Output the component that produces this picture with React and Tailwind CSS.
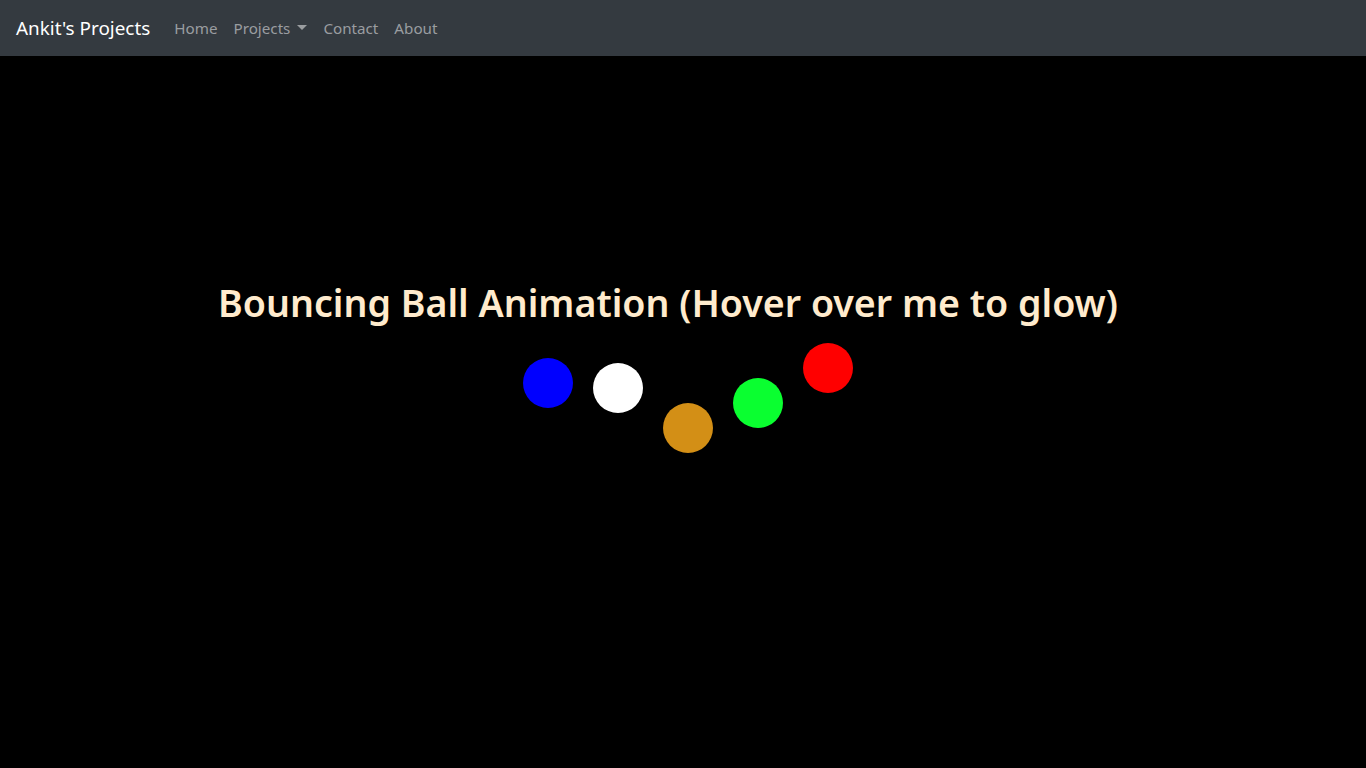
import React from "react";

export default function App() {
  const font = { fontFamily: '"Noto Sans", "Open Sans", sans-serif' };
  return (
    <div className="min-h-[768px] bg-black flex flex-col" style={font}>
      <nav className="h-[56px] bg-[#343a40] flex items-center px-4">
        <span className="text-[18.9px] text-white mr-4 leading-none">Ankit's Projects</span>
        <ul className="flex items-center text-[15.2px] text-[#9a9da0]">
          <li className="px-2">Home</li>
          <li className="px-2 flex items-center">
            Projects
            <span className="ml-[7px] inline-block w-0 h-0 border-l-[5px] border-r-[5px] border-t-[5px] border-l-transparent border-r-transparent border-t-[#9a9da0]"></span>
          </li>
          <li className="px-2">Contact</li>
          <li className="px-2">About</li>
        </ul>
      </nav>
      <main className="flex flex-col items-center pt-[223px]">
        <h1 className="text-[37.6px] leading-[48px] font-semibold text-[#ffebcd] pr-[30px] mb-4">
          Bouncing Ball Animation (Hover over me to glow)
        </h1>
        <div className="flex items-start pl-[10px]">
          <div className="w-[50px] h-[50px] rounded-full bg-[#0000ff] mx-[10px] mt-[15px]"></div>
          <div className="w-[50px] h-[50px] rounded-full bg-white mx-[10px] mt-[20px]"></div>
          <div className="w-[50px] h-[50px] rounded-full bg-[#d38f16] mx-[10px] mt-[60px]"></div>
          <div className="w-[50px] h-[50px] rounded-full bg-[#0aff30] mx-[10px] mt-[35px]"></div>
          <div className="w-[50px] h-[50px] rounded-full bg-[#ff0000] mx-[10px] mt-0"></div>
        </div>
      </main>
    </div>
  );
}
